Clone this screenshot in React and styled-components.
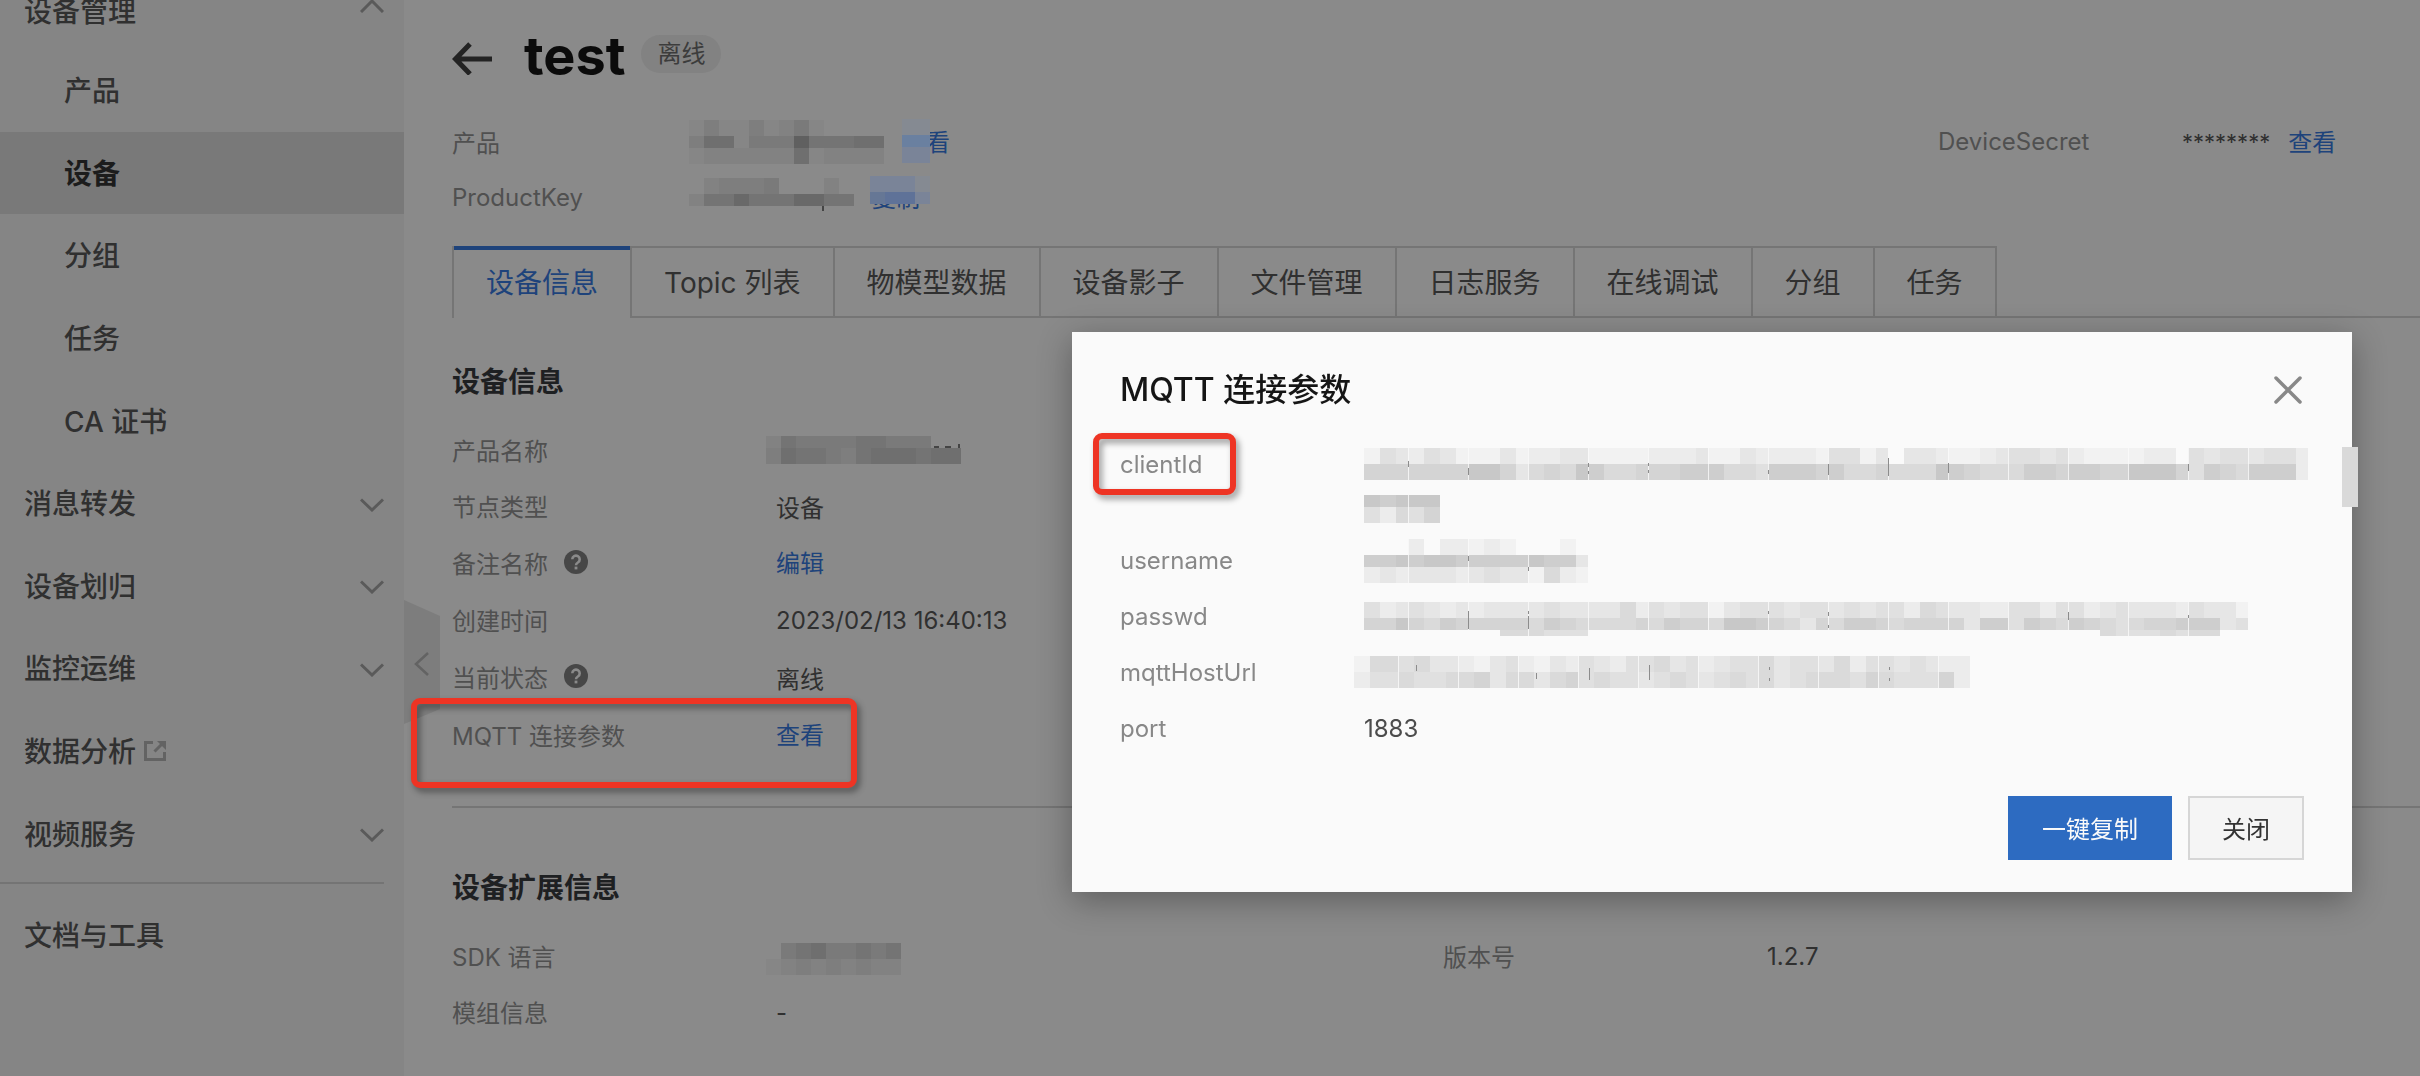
import React from "react";
import styled, { createGlobalStyle, css } from "styled-components";

const c = {
  page: "#8a8a8a",
  side: "#858585",
  sideActive: "#797979",
  line: "#757575",
  ink: "#303030",
  label: "#505050",
  strong: "#1e2022",
  link: "#1e437b",
  red: "#ee3424",
};

const GlobalStyle = createGlobalStyle`
  *, *::before, *::after { box-sizing: border-box; }
  body {
    margin: 0;
    background: ${c.page};
    font-family: Inter, "Noto Sans CJK SC", sans-serif;
    font-size: 24px;
    color: ${c.ink};
  }
  h1, h2, ul, dl, dd { margin: 0; padding: 0; }
  ul { list-style: none; }
  button { font-family: inherit; cursor: pointer; }
  a { text-decoration: none; }
`;

/* ---------- redaction mosaics ---------- */

const PALETTES = {
  light: ["#fafafa", "#f2f2f2", "#ececec", "#e6e6e6", "#e0e0e0", "#dadada", "#d4d4d4", "#cecece", "#c8c8c8", "#bdbdbd"],
  dark: ["#8a8a8a", "#868686", "#828282", "#7e7e7e", "#7a7a7a", "#747474", "#6f6f6f", "#696969", "#606060", "#585858"],
  blue: ["#8a8a8a", "#858a92", "#818892", "#7d8594", "#7a8498", "#73829a", "#6a80a0", "#667795", "#5f7298", "#566c96"],
};

const MosaicSvg = styled.svg`
  display: block;
  flex: none;
  margin-left: ${(p) => p.$shift || 0}px;
  ${(p) =>
    p.$cover &&
    css`
      position: absolute;
      left: ${p.$left || 0}px;
      top: ${p.$top}px;
    `}
`;

/* Seamed mosaics are tiled in 60px blocks of four cells; the first block holds three. */
const seamedX = (i) => (i < 3 ? i * 16 : 44 + Math.floor((i - 3) / 4) * 60 + ((i - 3) % 4) * 16);

function Mosaic({ tone = "dark", bands, cell = 15, seams, ticks = [], ...rest }) {
  const at = seams ? seamedX : (i) => i * cell;
  const width = at(Math.max(...bands.map(([, s]) => s.length)));
  const height = bands.reduce((sum, [h]) => sum + h, 0);
  let y = 0;
  return (
    <MosaicSvg width={width} height={height} aria-hidden="true" shapeRendering="crispEdges" {...rest}>
      {bands.map(([h, s], row) => {
        const top = y;
        y += h;
        return [...s].map((ch, i) =>
          ch === "." ? null : (
            <rect key={`${row}-${i}`} x={at(i)} y={top} width={at(i + 1) - at(i)} height={h} fill={PALETTES[tone][+ch]} />
          )
        );
      })}
      {seams &&
        Array.from({ length: Math.floor((width - 44) / 60) + 1 }, (_, i) => (
          <rect key={i} x={44 + i * 60} y="0" width="1" height={height} fill="#fafafa" opacity="0.8" />
        ))}
      {ticks.map(([x, ty, w, h]) => (
        <rect key={`t${x}-${ty}`} x={x} y={ty} width={w} height={h} fill={tone === "light" ? "#8c8c8c" : "#444"} />
      ))}
    </MosaicSvg>
  );
}

/* ---------- icons ---------- */

const Chevron = ({ up }) => (
  <svg width="24" height="14" viewBox="0 0 24 14" fill="none" stroke="#5a5a5a" strokeWidth="3" aria-hidden="true">
    <path d={up ? "M1 13 12 2 23 13" : "M1 1.5 12 12 23 1.5"} />
  </svg>
);

const BackArrow = () => (
  <svg width="40" height="38" viewBox="0 0 40 38" fill="none" stroke="#232323" strokeWidth="5" aria-hidden="true">
    <path d="M40 22H3M18 7 3.5 22 18 37" />
  </svg>
);

const External = () => (
  <svg width="22" height="22" viewBox="0 0 22 22" fill="none" stroke="#636363" strokeWidth="3" aria-hidden="true">
    <path d="M9 3.500H1.500v17h19V13M10.500 12.500 19 4" />
    <path d="M13 2h9v9z" fill="#636363" stroke="none" />
  </svg>
);

const Help = () => (
  <svg width="24" height="24" viewBox="0 0 24 24" aria-hidden="true">
    <circle cx="12" cy="12" r="12" fill="#474747" />
    <path d="M8.300 9.300a3.700 3.700 0 1 1 5.600 3.200c-1.400.8-1.900 1.300-1.900 2.700" fill="none" stroke="#8a8a8a" strokeWidth="2.600" />
    <rect x="10.600" y="16.600" width="2.800" height="2.800" fill="#8a8a8a" />
  </svg>
);

/* ---------- layout ---------- */

const Page = styled.div`
  display: flex;
  min-height: 100vh;
`;

const Sidebar = styled.nav`
  position: relative;
  flex: none;
  width: 404px;
  background: ${c.side};
`;

const NavViewport = styled.div`
  overflow: hidden;
`;

const NavList = styled.ul`
  display: grid;
  grid-auto-rows: 1fr;
  height: 413px;
`;

const NavLink = styled.a`
  display: flex;
  align-items: center;
  gap: 8px;
  height: 100%;
  padding: 0 20px 2px ${(p) => (p.$sub ? 64 : 24)}px;
  background: ${(p) => (p.$active ? c.sideActive : "transparent")};
  color: ${(p) => (p.$active ? "#1c1c1c" : c.ink)};
  font-size: 28px;
  font-weight: ${(p) => (p.$active ? 700 : 500)};
`;

const NavGroupTitle = styled(NavLink)`
  height: 77px;
  margin-top: -28px;
`;

const NavFooterLink = styled(NavLink)`
  height: 82px;
`;

const NavEnd = styled.span`
  display: flex;
  margin-left: auto;
  padding: ${(p) => (p.$up ? "0 0 8px" : "5px 0 0")};
`;

const NavDivider = styled.hr`
  height: 2px;
  margin: 7px 20px 10px 0;
  border: 0;
  background: #747474;
`;

const CollapseButton = styled.button`
  position: absolute;
  left: 100%;
  top: 600px;
  width: 36px;
  height: 124px;
  padding: 0;
  border: 0;
  background: #7d7d7d;
  clip-path: polygon(0 0, 100% 16px, 100% 109px, 0 100%);
`;

const Main = styled.main`
  flex: 1;
  min-width: 0;
  padding: 24px 0 36px 48px;
`;

const TitleBar = styled.header`
  display: flex;
  align-items: center;
  height: 64px;
`;

const BackLink = styled.a`
  display: flex;
  margin-right: 32px;
`;

const Title = styled.h1`
  font-size: 54px;
  line-height: 64px;
  font-weight: 700;
  color: #0b0b0b;
`;

const StatusPill = styled.span`
  margin: 0 0 4px 16px;
  padding: 0 16px;
  border-radius: 19px;
  background: #828282;
  line-height: 38px;
  color: #3c3c3c;
`;

const Summary = styled.div`
  display: grid;
  grid-template-columns: minmax(0, 1fr) 482px;
  margin-top: 26px;
`;

const Columns = styled.div`
  display: grid;
  grid-template-columns: minmax(0, 1fr) 977px;
  margin-top: 20px;
`;

const Details = styled.dl`
  display: flex;
  flex-direction: column;
  --label: ${(p) => p.$label}px;
`;

const Row = styled.div`
  position: relative;
  display: flex;
  align-items: center;
  height: ${(p) => (p.$tall ? 58 : 56)}px;
`;

const Label = styled.dt`
  display: flex;
  align-items: center;
  gap: 16px;
  flex: none;
  width: var(--label);
  padding-bottom: 2px;
  color: ${c.label};
`;

const Value = styled.dd`
  display: flex;
  align-items: center;
  gap: 18px;
`;

const Masked = styled.span`
  font-size: 22px;
`;

const Link = styled.a`
  position: relative;
  padding-bottom: 4px;
  color: ${c.link};
`;

const TabList = styled.div`
  display: flex;
  height: 72px;
  margin-top: 20px;
`;

const Tab = styled.button`
  flex: none;
  padding: 0 32px 2px;
  border: solid ${c.line};
  border-width: 2px 0 2px 2px;
  background: none;
  color: ${c.ink};
  font-size: 28px;
  ${(p) =>
    p.$active &&
    css`
      border-width: 0 0 0 2px;
      box-shadow: inset 0 4px 0 ${c.link};
      color: ${c.link};
    `}
`;

const TabRest = styled.div`
  flex: 1;
  border: solid ${c.line};
  border-width: 0 0 2px 2px;
`;

const Section = styled.section`
  padding: ${(p) => (p.$first ? "44px 0 42px" : "60px 0 0")};
  border-bottom: ${(p) => (p.$first ? `2px solid ${c.line}` : "0")};
`;

const SectionTitle = styled.h2`
  font-size: 28px;
  line-height: 40px;
  font-weight: 700;
  color: ${c.strong};
`;

const Highlight = styled.span`
  position: absolute;
  left: ${(p) => p.$left}px;
  top: ${(p) => p.$top}px;
  width: ${(p) => p.$w}px;
  height: ${(p) => p.$h}px;
  border: 6px solid ${c.red};
  border-radius: 9px;
  filter: drop-shadow(3px 4px 3px rgba(0, 0, 0, 0.4));
  pointer-events: none;
`;

/* ---------- dialog ---------- */

const Overlay = styled.div`
  position: fixed;
  inset: 0;
  display: flex;
  align-items: flex-start;
  justify-content: flex-end;
  padding: 332px 68px 0;
`;

const Dialog = styled.section`
  position: relative;
  width: 1280px;
  padding: 34px 48px 32px;
  background: #fafafa;
  box-shadow: 0 8px 32px rgba(0, 0, 0, 0.32);
`;

const DialogHead = styled.header`
  display: flex;
  align-items: center;
  justify-content: space-between;
  height: 48px;
`;

const DialogTitle = styled.h2`
  font-size: 32px;
  font-weight: 500;
  line-height: 48px;
  color: #151515;
`;

const CloseButton = styled.button`
  display: flex;
  padding: 0 2px;
  border: 0;
  background: none;
`;

const Params = styled.dl`
  display: flex;
  flex-direction: column;
  gap: 16px;
  margin-top: 30px;
`;

const Param = styled.div`
  position: relative;
  display: flex;
`;

const ParamLabel = styled.dt`
  flex: none;
  width: 244px;
  padding-top: 2px;
  line-height: 38px;
  color: #888888;
`;

const ParamText = styled.div`
  padding-top: 2px;
  line-height: 38px;
`;

const ParamLine = styled.div`
  display: flex;
  align-items: center;
  height: 40px;
`;

const ParamValue = styled.dd`
  color: #4c4c4c;
`;

const Actions = styled.footer`
  display: flex;
  justify-content: flex-end;
  gap: 16px;
  margin-top: 48px;
`;

const ActionButton = styled.button`
  height: 64px;
  padding: 0 32px 2px;
  border: 2px solid ${(p) => (p.$primary ? "#2d6bc1" : "#d6d6d6")};
  background: ${(p) => (p.$primary ? "#2d6bc1" : "#f5f5f5")};
  color: ${(p) => (p.$primary ? "#fafafa" : "#333333")};
  font-size: 24px;
`;

const ScrollThumb = styled.span`
  position: absolute;
  right: -6px;
  top: 115px;
  width: 16px;
  height: 60px;
  background: #d9d9d9;
`;

/* ---------- data ---------- */

const subItems = ["产品", "设备", "分组", "任务", "CA 证书"];
const topItems = ["消息转发", "设备划归", "监控运维", "数据分析", "视频服务"];
const tabs = ["设备信息", "Topic 列表", "物模型数据", "设备影子", "文件管理", "日志服务", "在线调试", "分组", "任务"];

const params = [
  {
    name: "clientId",
    marked: true,
    lines: [
      {
        bands: [
          [16, "143243111312233111122231132222144130332112344342111122043443442"],
          [16, "666666688635658755666777554777675565558765557767766888647657772"],
        ],
        ticks: [[44, 13, 1, 6], [104, 20, 1, 7], [224, 15, 1, 4], [224, 23, 1, 3], [284, 15, 1, 3], [284, 22, 1, 3], [404, 22, 1, 4], [464, 16, 1, 11], [524, 10, 1, 18], [584, 15, 1, 10], [824, 16, 1, 7]],
      },
      { bands: [[10, "."], [12, "87888"], [16, "42546"]] },
    ],
  },
  {
    name: "username",
    lines: [
      {
        bands: [[2, "."], [16, "000202212100010"], [12, "778788777778773"], [16, "232333234331521"]],
        ticks: [[104, 19, 1, 5], [164, 30, 1, 4]],
      },
    ],
  },
  {
    name: "passwd",
    lines: [
      {
        bands: [
          [11, "."],
          [16, "42343232333343333524344134443443434425433224424423433324331"],
          [12, "66865766666576555565766588765365776566663774765765456677734"],
          [6, ".".repeat(9) + "555444" + ".".repeat(34) + "54445455"],
          [6, "."],
        ],
        ticks: [[104, 20, 1, 18], [164, 20, 1, 3], [164, 25, 1, 13], [404, 20, 1, 3], [464, 21, 1, 4], [464, 34, 1, 3], [704, 21, 1, 8], [824, 24, 1, 3], [884, 20, 1, 3], [884, 33, 1, 4]],
      },
    ],
  },
  {
    name: "mqttHostUrl",
    lines: [
      {
        shift: -10,
        bands: [
          [16, "15545332134213243244534234453443524434322"],
          [16, "24454455635535645443454345453455546544462"],
        ],
        ticks: [[62, 9, 1, 6], [182, 17, 1, 6], [235, 12, 1, 12], [295, 9, 1, 15], [415, 11, 1, 3], [415, 22, 1, 3], [535, 11, 1, 3], [535, 22, 1, 3]],
      },
    ],
  },
  { name: "port", text: "1883" },
];

export default function App() {
  return (
    <>
      <GlobalStyle />
      <Page>
        <Sidebar aria-label="设备管理">
          <NavViewport>
            <NavGroupTitle href="#manage">
              设备管理
              <NavEnd $up>
                <Chevron up />
              </NavEnd>
            </NavGroupTitle>
            <NavList>
              {subItems.map((t) => (
                <li key={t}>
                  <NavLink href="#sub" $sub $active={t === "设备"}>
                    {t}
                  </NavLink>
                </li>
              ))}
            </NavList>
            <NavList>
              {topItems.map((t) => (
                <li key={t}>
                  <NavLink href="#top">
                    {t}
                    {t === "数据分析" ? (
                      <External />
                    ) : (
                      <NavEnd>
                        <Chevron />
                      </NavEnd>
                    )}
                  </NavLink>
                </li>
              ))}
            </NavList>
            <NavDivider />
            <NavFooterLink href="#docs">文档与工具</NavFooterLink>
          </NavViewport>
          <CollapseButton type="button" aria-label="收起菜单">
            <svg width="36" height="124" viewBox="0 0 36 124" fill="none" stroke="#636363" strokeWidth="2.500" aria-hidden="true">
              <path d="M24 53 12 64l12 11" />
            </svg>
          </CollapseButton>
        </Sidebar>

        <Main>
          <TitleBar>
            <BackLink href="#back" aria-label="返回">
              <BackArrow />
            </BackLink>
            <Title>test</Title>
            <StatusPill>离线</StatusPill>
          </TitleBar>

          <Summary>
            <Details $label={237}>
              <Row>
                <Label>产品</Label>
                <Value>
                  <Mosaic bands={[[16, "1311312410000"], [12, "3661444855566"], [16, "1222222612222"]]} />
                  <Link href="#product">
                    查看
                    <Mosaic tone="blue" cell={14} $cover $top={-4} bands={[[16, "11"], [12, "66"], [16, "44"]]} />
                  </Link>
                </Value>
              </Row>
              <Row>
                <Label>ProductKey</Label>
                <Value>
                  <Mosaic
                    bands={[[16, "02333400020"], [12, "25575557755"], [12, "."]]}
                    ticks={[[133, 28, 2, 5]]}
                  />
                  <Link href="#key">
                    复制
                    <Mosaic tone="blue" $cover $left={-2} $top={-3} bands={[[16, "4441"], [12, "7884"]]} />
                  </Link>
                </Value>
              </Row>
            </Details>
            <Details $label={244}>
              <Row>
                <Label>DeviceSecret</Label>
                <Value>
                  <Masked>********</Masked>
                  <Link href="#secret">查看</Link>
                </Value>
              </Row>
            </Details>
          </Summary>

          <TabList role="tablist">
            {tabs.map((t, i) => (
              <Tab key={t} type="button" role="tab" aria-selected={i === 0} $active={i === 0}>
                {t}
              </Tab>
            ))}
            <TabRest />
          </TabList>

          <Section $first>
            <SectionTitle>设备信息</SectionTitle>
            <Columns>
              <Details $label={324}>
                <Row>
                  <Label>产品名称</Label>
                  <Value>
                    <Mosaic
                      $shift={-10}
                      bands={[[12, "25444455444"], [16, "3655435666566"]]}
                      ticks={[[168, 10, 5, 2], [179, 10, 6, 2], [192, 8, 2, 4]]}
                    />
                  </Value>
                </Row>
                <Row>
                  <Label>节点类型</Label>
                  <Value>设备</Value>
                </Row>
                <Row $tall>
                  <Label>
                    备注名称 <Help />
                  </Label>
                  <Value>
                    <Link href="#edit">编辑</Link>
                  </Value>
                </Row>
                <Row>
                  <Label>创建时间</Label>
                  <Value>2023/02/13 16:40:13</Value>
                </Row>
                <Row $tall>
                  <Label>
                    当前状态 <Help />
                  </Label>
                  <Value>离线</Value>
                </Row>
                <Row $tall>
                  <Label>MQTT 连接参数</Label>
                  <Value>
                    <Link href="#mqtt">查看</Link>
                  </Value>
                  <Highlight $left={-41} $top={-8} $w={446} $h={90} />
                </Row>
              </Details>
            </Columns>
          </Section>

          <Section>
            <SectionTitle>设备扩展信息</SectionTitle>
            <Columns>
              <Details $label={324}>
                <Row>
                  <Label>SDK 语言</Label>
                  <Value>
                    <Mosaic $shift={-10} bands={[[6, "."], [16, ".45644545"], [16, "123232322"]]} />
                  </Value>
                </Row>
                <Row>
                  <Label>模组信息</Label>
                  <Value>-</Value>
                </Row>
              </Details>
              <Details $label={324}>
                <Row>
                  <Label>版本号</Label>
                  <Value>1.2.7</Value>
                </Row>
              </Details>
            </Columns>
          </Section>
        </Main>
      </Page>

      <Overlay>
        <Dialog role="dialog" aria-modal="true" aria-labelledby="mqtt-title">
          <DialogHead>
            <DialogTitle id="mqtt-title">MQTT 连接参数</DialogTitle>
            <CloseButton type="button" aria-label="关闭">
              <svg width="28" height="28" viewBox="0 0 28 28" fill="none" stroke="#888888" strokeWidth="3.500" strokeLinecap="round" aria-hidden="true">
                <path d="M2 2l24 24M26 2 2 26" />
              </svg>
            </CloseButton>
          </DialogHead>
          <Params>
            {params.map((p) => (
              <Param key={p.name}>
                <ParamLabel>{p.name}</ParamLabel>
                <ParamValue>
                  {p.text && <ParamText>{p.text}</ParamText>}
                  {p.lines?.map((l, i) => (
                    <ParamLine key={i}>
                      <Mosaic tone="light" seams $shift={l.shift} bands={l.bands} ticks={l.ticks} />
                    </ParamLine>
                  ))}
                </ParamValue>
                {p.marked && <Highlight $left={-27} $top={-11} $w={143} $h={62} />}
              </Param>
            ))}
          </Params>
          <Actions>
            <ActionButton type="button" $primary>
              一键复制
            </ActionButton>
            <ActionButton type="button">关闭</ActionButton>
          </Actions>
          <ScrollThumb />
        </Dialog>
      </Overlay>
    </>
  );
}
